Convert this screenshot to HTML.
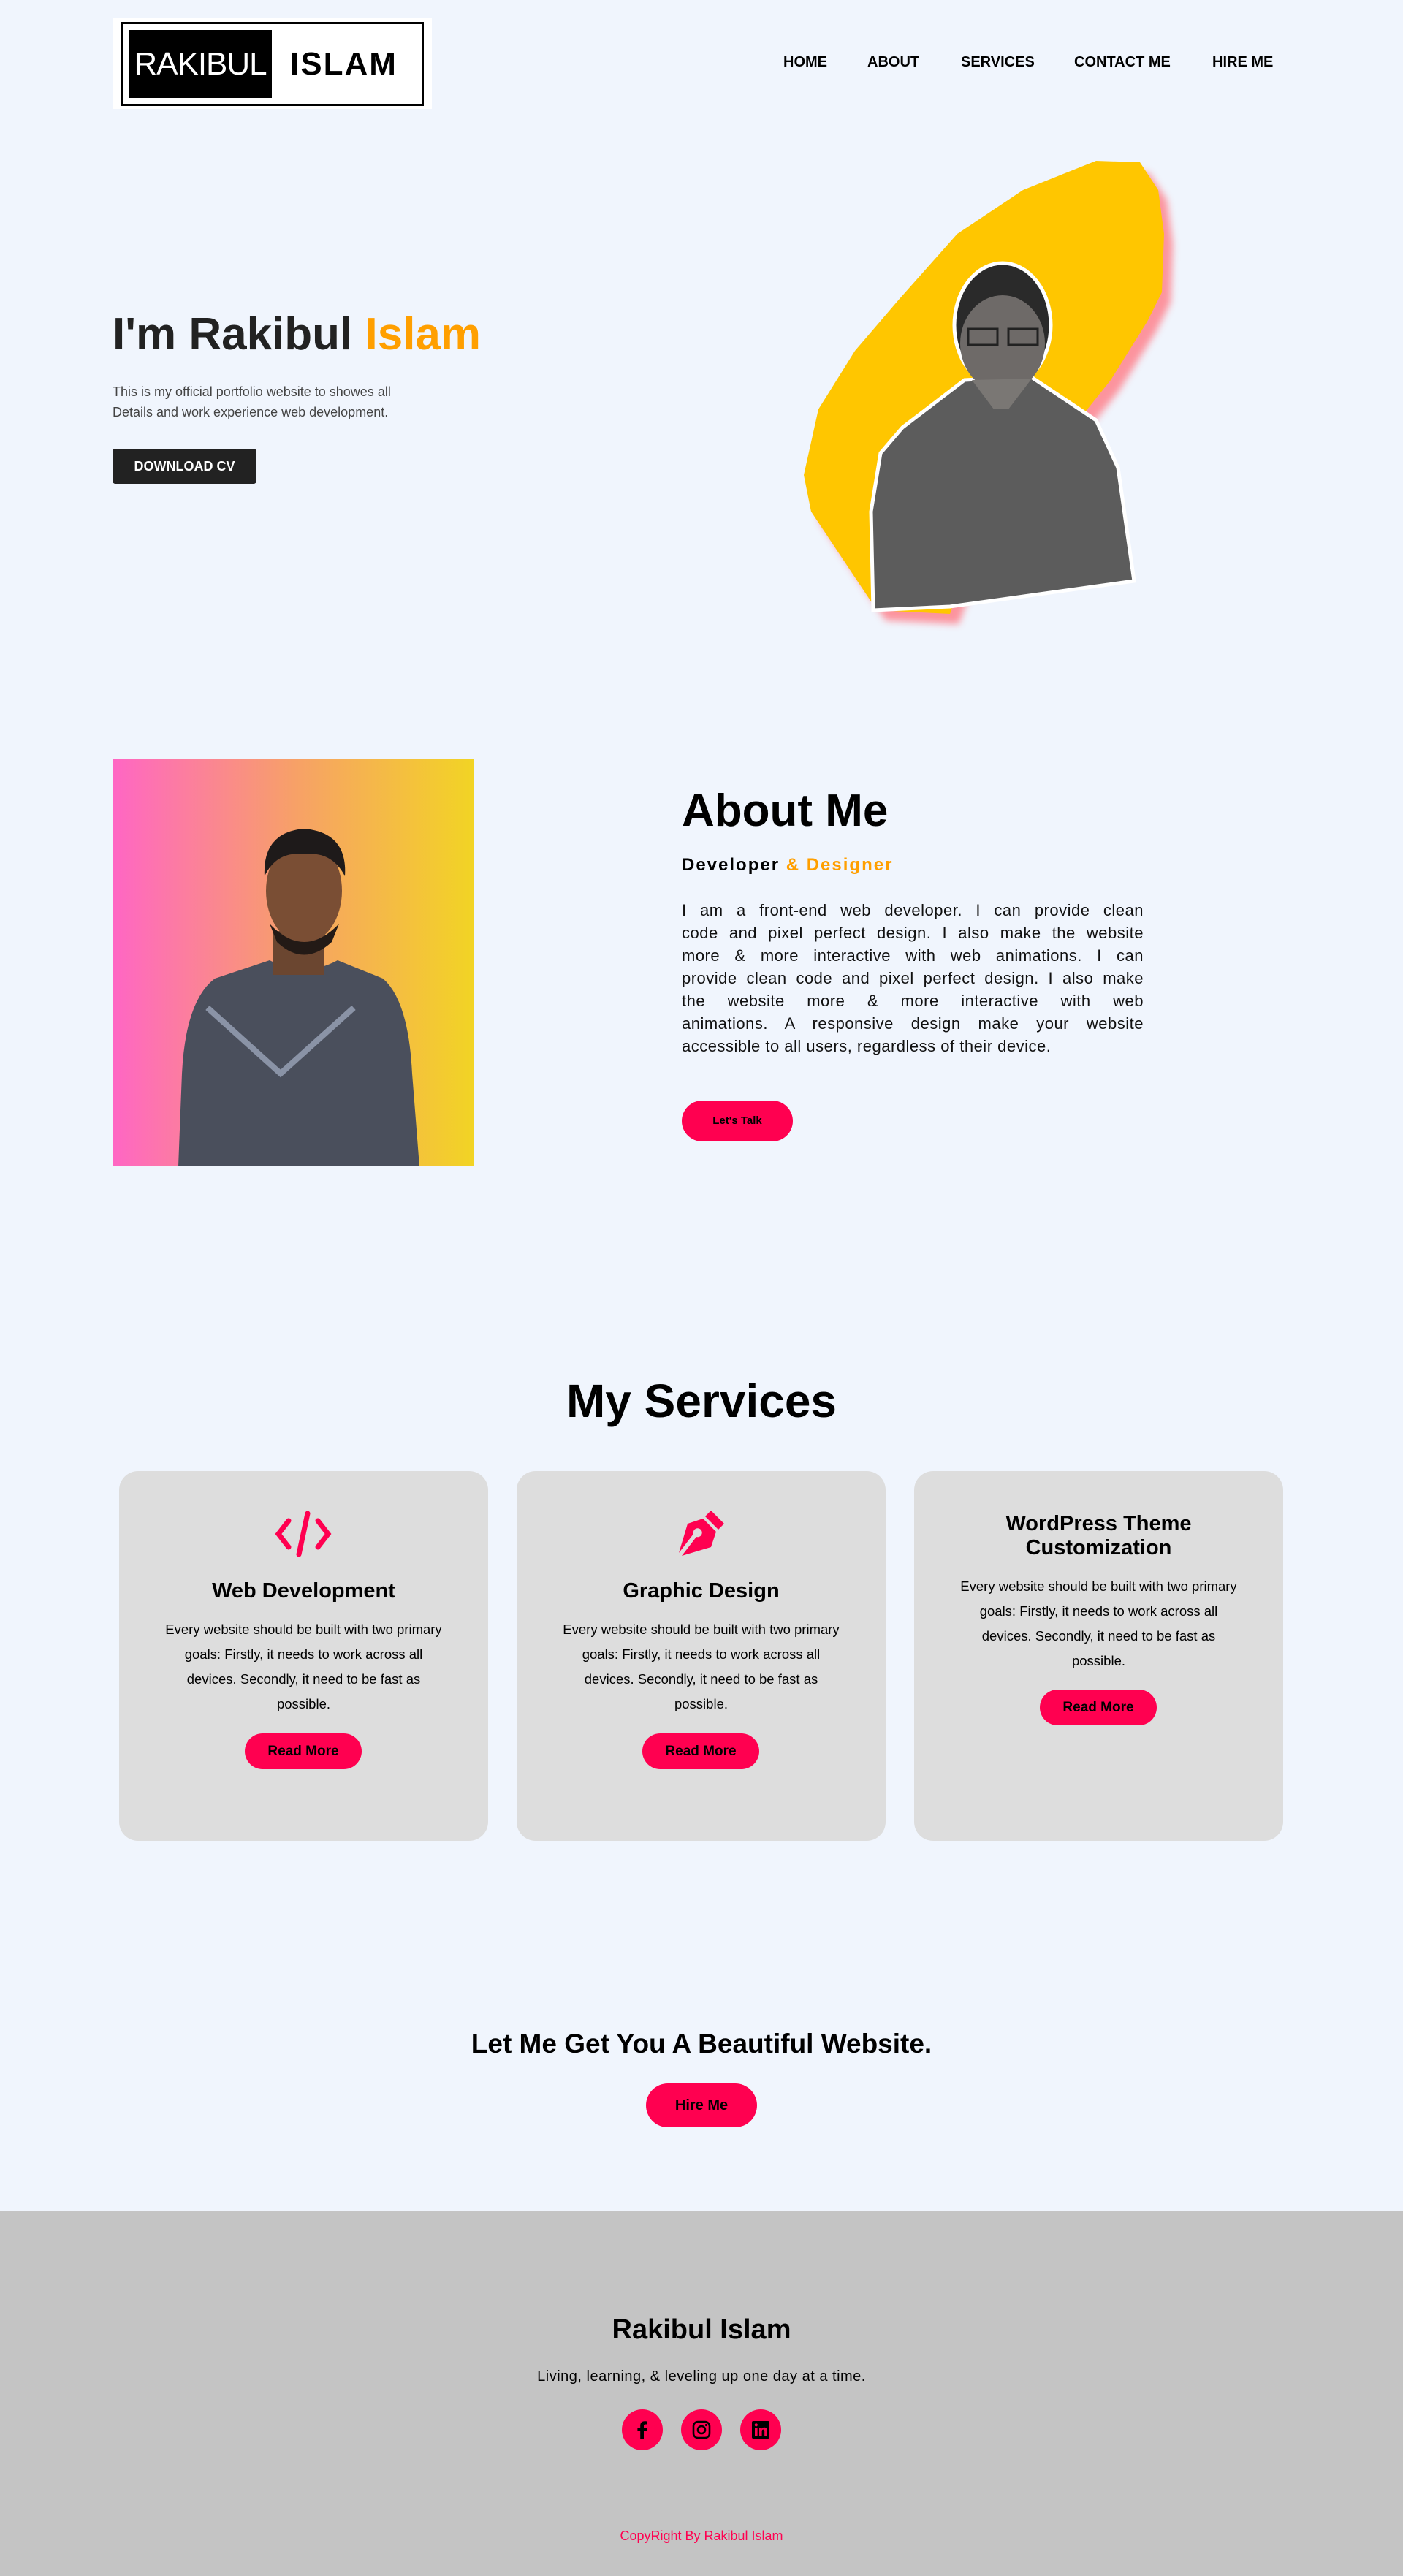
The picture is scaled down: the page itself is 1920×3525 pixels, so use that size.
<!DOCTYPE html>
<html><head><meta charset="utf-8">
<style>
*{margin:0;padding:0;box-sizing:border-box}
html,body{width:1920px;height:3525px;background:#f0f5fd;font-family:"Liberation Sans",Arial,sans-serif;color:#000;overflow:hidden}
.abs{position:absolute}
.logo{left:154px;top:25px;width:437px;height:124px;background:#fff}
.logo .frame{position:absolute;left:11px;top:5px;width:415px;height:115px;border:3px solid #000}
.logo .blk{position:absolute;left:22px;top:16px;width:196px;height:93px;background:#000;color:#fff;font-size:44px;line-height:93px;text-align:center;letter-spacing:-1px}
.logo .isl{position:absolute;left:243px;top:16px;line-height:93px;font-size:44px;font-weight:bold;letter-spacing:2px}
nav a{position:absolute;top:74px;font-weight:bold;font-size:20px;color:#000;text-decoration:none;white-space:nowrap}
h1.hero{left:154px;top:422px;font-size:62px;font-weight:bold;color:#222;white-space:nowrap}
.hp{left:154px;top:522px;font-size:18px;line-height:28px;color:#444}
.btn-dark{left:154px;top:614px;width:197px;height:48px;background:#222;border-radius:4px;color:#fff;font-weight:bold;font-size:18px;text-align:center;line-height:48px}
.about-img{left:154px;top:1039px;width:495px;height:557px;background:linear-gradient(90deg,#ff66c4,#f7a068 50%,#f2d424);overflow:hidden}
h2.about{left:933px;top:1074px;font-size:62px;font-weight:bold;white-space:nowrap}
.sub{left:933px;top:1170px;font-size:24px;font-weight:bold;letter-spacing:2px;white-space:nowrap}
.ap{left:933px;top:1230px;width:632px;font-size:22px;line-height:31px;letter-spacing:.5px;color:#111}
.ap div{text-align:justify;text-align-last:justify;white-space:nowrap;height:31px}
.ap div.l{text-align-last:left}
.pill{background:#ff0050;border-radius:30px;font-weight:bold;text-align:center;color:#000;font-family:"Liberation Sans",Arial,sans-serif}
h2.serv{left:0;width:1920px;top:1880px;text-align:center;font-size:64px;font-weight:bold}
.card{top:2013px;width:505px;height:506px;background:#dddddd;border-radius:26px;text-align:center}
.card h3{font-size:29px;font-weight:bold;position:absolute;left:0;right:0}
.card p{position:absolute;left:0;right:0;font-size:18.5px;line-height:34px;white-space:nowrap}
.card .rm{position:absolute;left:172px;width:160px;height:49px;line-height:49px;font-size:19px}
.cta{left:0;width:1920px;top:2776px;text-align:center;font-size:37px;font-weight:bold}
footer{position:absolute;left:0;top:3025px;width:1920px;height:500px;background:#c4c4c4}
.fc{position:absolute;left:0;width:1920px;text-align:center}
.soc{position:absolute;top:272px;width:56px;height:56px;border-radius:50%;background:#ff0050}
.soc svg{position:absolute;left:14px;top:14px}
</style></head><body>

<div class="abs logo">
  <div class="frame"></div>
  <div class="blk">RAKIBUL</div>
  <div class="isl">ISLAM</div>
</div>

<nav>
  <a style="left:1072px">HOME</a>
  <a style="left:1187px">ABOUT</a>
  <a style="left:1315px">SERVICES</a>
  <a style="left:1470px">CONTACT ME</a>
  <a style="left:1659px">HIRE ME</a>
</nav>

<h1 class="abs hero">I'm Rakibul <span style="color:#ff9f00">Islam</span></h1>
<div class="abs hp">This is my official portfolio website to showes all<br>Details and work experience web development.</div>
<div class="abs btn-dark">DOWNLOAD CV</div>

<svg class="abs" style="left:0;top:0" width="1920" height="900">
  <defs><filter id="bl"><feGaussianBlur stdDeviation="5"/></filter></defs>
  <polygon filter="url(#bl)" fill="#ff7c86" opacity=".8" transform="translate(12,14)" points="1500,220 1560,222 1585,260 1593,320 1590,400 1570,440 1520,520 1480,570 1430,640 1330,760 1300,840 1200,835 1150,760 1110,700 1100,650 1120,560 1170,480 1230,410 1310,320 1400,260"/>
  <polygon fill="#ffc600" points="1500,220 1560,222 1585,260 1593,320 1590,400 1570,440 1520,520 1480,570 1430,640 1330,760 1300,840 1200,835 1150,760 1110,700 1100,650 1120,560 1170,480 1230,410 1310,320 1400,260"/>
  <g stroke="#fff" stroke-width="5">
    <polygon fill="#5c5c5c" points="1320,520 1410,515 1500,575 1530,640 1552,795 1300,830 1195,835 1192,700 1205,620 1235,585"/>
    <ellipse cx="1372" cy="445" rx="66" ry="85" fill="#2a2a2a"/>
  </g>
  <ellipse cx="1372" cy="470" rx="58" ry="66" fill="#6e6a68"/>
  <polygon fill="#7a7774" points="1330,520 1412,518 1380,560 1360,560"/>
  <path d="M1325 450h40v22h-40zM1380 450h40v22h-40z" fill="none" stroke="#222" stroke-width="3"/>
</svg>

<div class="abs about-img">
  <svg width="495" height="557">
    <path d="M90 557 L95 430 Q100 330 140 300 L215 275 Q262 300 308 275 L370 300 Q405 330 410 430 L420 557Z" fill="#4a4f5c"/>
    <path d="M130 340 L230 430 L330 340" stroke="#8a93a6" stroke-width="8" fill="none"/>
    <rect x="220" y="235" width="70" height="60" fill="#6b4630"/>
    <ellipse cx="262" cy="180" rx="52" ry="72" fill="#7a4e34"/>
    <path d="M208 160 Q205 100 262 95 Q322 100 318 160 Q300 125 262 130 Q225 125 208 160Z" fill="#1e1a1a"/>
    <path d="M215 225 Q262 275 310 225 L300 250 Q262 285 225 250Z" fill="#231a16"/>
  </svg>
</div>
<h2 class="abs about">About Me</h2>
<div class="abs sub">Developer <span style="color:#ff9f00">&amp; Designer</span></div>
<div class="abs ap">
<div>I am a front-end web developer. I can provide clean</div>
<div>code and pixel perfect design. I also make the website</div>
<div>more &amp; more interactive with web animations. I can</div>
<div>provide clean code and pixel perfect design. I also make</div>
<div>the website more &amp; more interactive with web</div>
<div>animations. A responsive design make your website</div>
<div class="l">accessible to all users, regardless of their device.</div>
</div>
<div class="abs pill" style="left:933px;top:1506px;width:152px;height:56px;line-height:56px;font-size:15px">Let's Talk</div>

<h2 class="abs serv">My Services</h2>

<div class="abs card" style="left:163px">
  <svg style="position:absolute;left:212px;top:54px" width="80" height="64" viewBox="0 0 80 64"><g stroke="#ff0050" stroke-width="7" stroke-linecap="round" fill="none"><path d="M20 14 L6 32 L20 50"/><path d="M60 14 L74 32 L60 50"/><path d="M46 4 L34 60"/></g></svg>
  <h3 style="top:148px">Web Development</h3>
  <p style="top:200px">Every website should be built with two primary<br>goals: Firstly, it needs to work across all<br>devices. Secondly, it need to be fast as<br>possible.</p>
  <div class="rm pill" style="top:359px">Read More</div>
</div>
<div class="abs card" style="left:707px">
  <svg style="position:absolute;left:220px;top:52px" width="66" height="66" viewBox="0 0 66 66"><path d="M46 2 L64 20 L56 28 L38 10Z" fill="#ff0050"/><path d="M35 13 L53 31 L46 52 L6 64 L26 38 A6 6 0 1 0 22 34 L2 60 L14 20Z" fill="#ff0050"/></svg>
  <h3 style="top:148px">Graphic Design</h3>
  <p style="top:200px">Every website should be built with two primary<br>goals: Firstly, it needs to work across all<br>devices. Secondly, it need to be fast as<br>possible.</p>
  <div class="rm pill" style="top:359px">Read More</div>
</div>
<div class="abs card" style="left:1251px">
  <h3 style="top:56px;line-height:33px">WordPress Theme<br>Customization</h3>
  <p style="top:141px">Every website should be built with two primary<br>goals: Firstly, it needs to work across all<br>devices. Secondly, it need to be fast as<br>possible.</p>
  <div class="rm pill" style="top:299px">Read More</div>
</div>

<div class="abs cta">Let Me Get You A Beautiful Website.</div>
<div class="abs pill" style="left:884px;top:2851px;width:152px;height:60px;line-height:60px;font-size:20px">Hire Me</div>

<footer>
  <div class="fc" style="top:142px;font-size:38px;font-weight:bold">Rakibul Islam</div>
  <div class="fc" style="top:216px;font-size:20px;letter-spacing:.5px">Living, learning, &amp; leveling up one day at a time.</div>
  <div class="soc" style="left:851px"><svg width="28" height="28" viewBox="0 0 28 28"><path d="M16 27V16h4l.6-4.5H16V8.7c0-1.3.4-2.2 2.2-2.2h2.5V2.5c-.4-.1-1.9-.2-3.6-.2-3.5 0-5.9 2.1-5.9 6v3.3H7.4V16h3.8v11z" fill="#000"/></svg></div>
  <div class="soc" style="left:932px"><svg width="28" height="28" viewBox="0 0 28 28"><rect x="3" y="3" width="22" height="22" rx="6" fill="none" stroke="#000" stroke-width="2.6"/><circle cx="14" cy="14" r="5" fill="none" stroke="#000" stroke-width="2.6"/><circle cx="20.5" cy="7.5" r="1.6" fill="#000"/></svg></div>
  <div class="soc" style="left:1013px"><svg width="28" height="28" viewBox="0 0 28 28"><rect x="2" y="2" width="24" height="24" rx="2" fill="#000"/><rect x="6" y="11" width="3.6" height="11" fill="#ff0050"/><circle cx="7.8" cy="7.3" r="2.1" fill="#ff0050"/><path d="M12 11h3.4v1.6c.6-1 1.8-1.9 3.6-1.9 3 0 3.8 1.9 3.8 4.6V22h-3.6v-5.9c0-1.4-.3-2.5-1.7-2.5s-1.9 1.1-1.9 2.5V22H12z" fill="#ff0050"/></svg></div>
  <div class="fc" style="top:435px;font-size:18px;color:#ff0050">CopyRight By Rakibul Islam</div>
</footer>

</body></html>
